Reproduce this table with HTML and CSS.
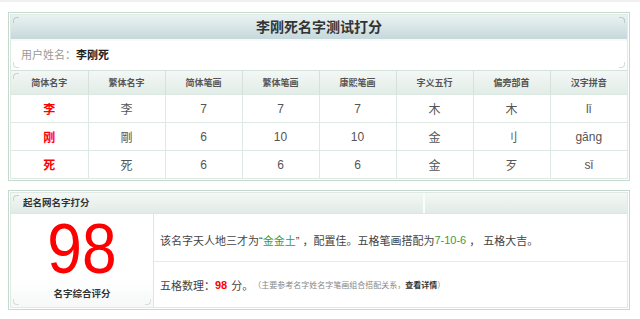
FILE: index.html
```html
<!DOCTYPE html>
<html lang="zh-CN">
<head>
<meta charset="utf-8">
<title>李刚死名字测试打分</title>
<link rel="stylesheet" href="styles.css">
</head>
<body>
<div class="topbar"></div>
<div class="wrap">
  <div class="box">
    <div class="box-in">
      <div class="title orn">李刚死名字测试打分</div>
      <div class="user orn-b">用户姓名：<b>李刚死</b></div>
      <table class="grid">
        <thead>
          <tr>
            <th class="orn-tl">简体名字</th><th>繁体名字</th><th>简体笔画</th><th>繁体笔画</th>
            <th>康熙笔画</th><th>字义五行</th><th>偏旁部首</th><th>汉字拼音</th>
          </tr>
        </thead>
        <tbody>
          <tr><td class="red">李</td><td>李</td><td>7</td><td>7</td><td>7</td><td>木</td><td>木</td><td>lǐ</td></tr>
          <tr><td class="red">刚</td><td>剛</td><td>6</td><td>10</td><td>10</td><td>金</td><td>刂</td><td>gāng</td></tr>
          <tr><td class="red">死</td><td>死</td><td>6</td><td>6</td><td>6</td><td>金</td><td>歹</td><td>sǐ</td></tr>
        </tbody>
      </table>
    </div>
  </div>

  <div class="box box2">
    <div class="box-in">
      <div class="head">
        <div class="head-l orn-tl">起名网名字打分</div>
        <div class="head-r"></div>
      </div>
      <div class="body">
        <div class="score orn-b">
          <div class="num"><span>98</span></div>
          <div class="label">名字综合评分</div>
        </div>
        <div class="desc">
          <div class="line line1">该名字天人地三才为“<span class="green">金金土</span>” ，配置佳。五格笔画搭配为<span class="green">7-10-6</span> ， 五格大吉。</div>
          <div class="line line2">五格数理：<b class="red">98</b> 分。<span class="note">（主要参考名字姓名字笔画组合搭配关系，<b>查看详情</b>）</span></div>
        </div>
      </div>
    </div>
  </div>
</div>
</body>
</html>
```

FILE: styles.css
```css
html, body {
  margin: 0;
  padding: 0;
  background: #fff;
  font-family: "Liberation Sans", "Noto Sans CJK SC", sans-serif;
  color: #444;
}

.topbar {
  height: 2px;
  background: #f0f0f0;
}

.wrap {
  padding: 10px 10px 0 8px;
}

.box {
  border: 1px solid #c6d9cf;
  padding: 1px;
}

.box-in {
  border: 1px solid #dfeae5;
}

.box2 {
  margin-top: 9px;
}

/* title band */
.title {
  position: relative;
  height: 24px;
  line-height: 24px;
  text-align: center;
  font-size: 14px;
  font-weight: bold;
  color: #333;
  background: linear-gradient(#eaf2f2, #dae7e8 45%, #c5d8db);
  border-bottom: 2px solid #f6f9f8;
}

.user {
  position: relative;
  height: 29px;
  line-height: 29px;
  padding-left: 10px;
  font-size: 11px;
  color: #9a9a9a;
  border-bottom: 1px solid #d3e2da;
}

.user b {
  color: #222;
  font-size: 11px;
}

/* ornaments */
.orn::before,
.orn::after,
.orn-b::before,
.orn-b::after,
.orn-tl::before {
  content: "";
  position: absolute;
  width: 5px;
  height: 5px;
}

.orn::before {
  left: 2px;
  top: 2px;
  border-top: 1px solid #b8cfc6;
  border-left: 1px solid #b8cfc6;
  border-top-left-radius: 4px;
}

.orn::after {
  right: 2px;
  top: 2px;
  border-top: 1px solid #b8cfc6;
  border-right: 1px solid #b8cfc6;
  border-top-right-radius: 4px;
}

.orn-b::before {
  left: 2px;
  bottom: 2px;
  border-bottom: 1px solid #d3e0da;
  border-left: 1px solid #d3e0da;
  border-bottom-left-radius: 4px;
}

.orn-b::after {
  right: 2px;
  bottom: 2px;
  border-bottom: 1px solid #d3e0da;
  border-right: 1px solid #d3e0da;
  border-bottom-right-radius: 4px;
}

.orn-tl {
  position: relative;
}

.orn-tl::before {
  left: 2px;
  top: 2px;
  border-top: 1px solid #c3d6cd;
  border-left: 1px solid #c3d6cd;
  border-top-left-radius: 4px;
}

/* table */
.grid {
  width: 100%;
  border-collapse: collapse;
  table-layout: fixed;
}

.grid th {
  height: 23px;
  padding: 0;
  font-size: 9px;
  font-weight: bold;
  color: #555;
  background: linear-gradient(#f3f7f5, #e2ece7);
  border-right: 1px solid #d4e2db;
  border-bottom: 1px solid #dbe7e1;
}

.grid td {
  height: 27px;
  padding: 0;
  text-align: center;
  font-size: 12px;
  color: #555;
  border-right: 1px solid #dfe9e4;
  border-bottom: 1px solid #dfe9e4;
}

.grid th:last-child,
.grid td:last-child {
  border-right: none;
}

.grid tr:last-child td {
  border-bottom: none;
}

.grid td.red {
  color: #ff0000;
  font-weight: bold;
}

/* box 2 */
.head {
  display: flex;
  height: 20px;
  border-bottom: 1px solid #dbe7e1;
  background: linear-gradient(#f4f8f6, #e1ebe6);
}

.head-l {
  width: 400px;
  padding-left: 12px;
  line-height: 20px;
  font-size: 9.5px;
  font-weight: bold;
  color: #333;
  border-right: 2px solid #fbfdfc;
}

.head-r {
  flex: 1;
}

.body {
  display: flex;
}

.score {
  position: relative;
  width: 142px;
  height: 93px;
  border-right: 1px solid #dbe7e1;
  text-align: center;
  background: linear-gradient(#fff 70%, #f6f9f8);
}

.num {
  font-family: "Liberation Sans", sans-serif;
  font-size: 70px;
  line-height: 70px;
  color: #ff0000;
}

.num span {
  display: inline-block;
  transform: scaleX(0.89);
}

.label {
  font-size: 9.5px;
  font-weight: bold;
  line-height: 20px;
  color: #333;
}

.desc {
  flex: 1;
  display: flex;
  flex-direction: column;
}

.line {
  display: flex;
  align-items: center;
  padding-left: 6px;
  font-size: 11px;
  color: #444;
  white-space: pre;
}

.line1 {
  height: 43px;
  padding-top: 4px;
  border-bottom: 1px solid #e3ece8;
}

.line2 {
  height: 45px;
}

.green {
  color: #3d9b3d;
}

.red {
  color: #ff0000;
}

.line2 b.red {
  margin: 0 1px 0 0;
}

.note {
  font-size: 8px;
  color: #888;
}

.note b {
  color: #333;
}
```
